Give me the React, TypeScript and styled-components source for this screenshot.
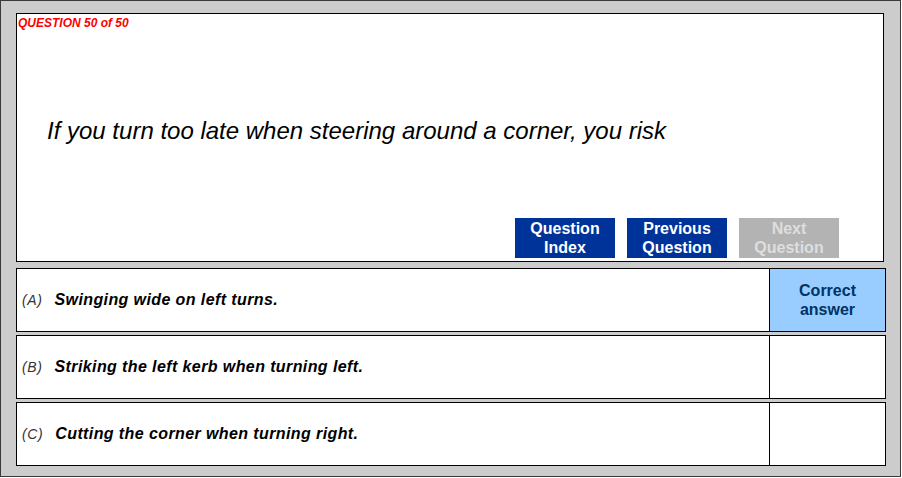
import React from "react"
import styled, { createGlobalStyle } from "styled-components"

const GlobalStyle = createGlobalStyle`
  html, body {
    margin: 0;
    padding: 0;
    background: #ffffff;
  }
  body {
    font-family: "Liberation Sans", Arial, sans-serif;
  }
`

const Frame = styled.div`
  box-sizing: border-box;
  width: 901px;
  height: 477px;
  border: 1px solid #3a3a3a;
  background: #cccccc;
  padding: 12px 0 0 15px;
  display: flex;
  flex-direction: column;
`

const QuestionBox = styled.section`
  box-sizing: border-box;
  width: 868px;
  height: 249px;
  border: 1px solid #000000;
  background: #ffffff;
  display: flex;
  flex-direction: column;
`

const Counter = styled.div`
  padding: 2px 0 0 1px;
  font-size: 12px;
  line-height: 14px;
  font-weight: bold;
  font-style: italic;
  color: #ff0000;
`

const Prompt = styled.p`
  margin: 87px 0 0;
  padding-left: 30px;
  font-size: 24px;
  line-height: 28px;
  font-style: italic;
  color: #000000;
`

const NavBar = styled.nav`
  margin-top: auto;
  display: flex;
  justify-content: flex-end;
  gap: 12px;
  padding: 0 44px 3px 0;
`

const NavButton = styled.button<{ disabled?: boolean }>`
  box-sizing: border-box;
  width: 100px;
  height: 40px;
  margin: 0;
  padding: 0;
  border: none;
  background: ${(p) => (p.disabled ? "#b3b3b3" : "#003399")};
  color: ${(p) => (p.disabled ? "#dedede" : "#ffffff")};
  font-family: "Liberation Sans", Arial, sans-serif;
  font-size: 16px;
  line-height: 19px;
  font-weight: bold;
  text-align: center;
`

const Answers = styled.ol`
  list-style: none;
  margin: 6px 0 0;
  padding: 0;
  display: flex;
  flex-direction: column;
  gap: 3px;
`

const AnswerRow = styled.li`
  box-sizing: border-box;
  width: 870px;
  height: 64px;
  border: 1px solid #000000;
  background: #ffffff;
  display: grid;
  grid-template-columns: 1fr 115px;
`

const AnswerText = styled.div`
  border-right: 1px solid #000000;
  display: flex;
  align-items: center;
  padding-left: 5px;
  font-style: italic;
  color: #000000;
`

const Letter = styled.span`
  font-size: 14px;
  font-weight: normal;
  letter-spacing: 0.6px;
  color: #333333;
  margin-right: 12px;
`

const Option = styled.span`
  font-size: 16px;
  font-weight: bold;
  letter-spacing: 0.4px;
`

const Verdict = styled.div<{ isCorrect: boolean }>`
  display: flex;
  align-items: center;
  justify-content: center;
  background: ${(p) => (p.isCorrect ? "#99ccff" : "#ffffff")};
  color: #003366;
  font-size: 16px;
  line-height: 19px;
  font-weight: bold;
  text-align: center;
`

const options = [
  { letter: "A", text: "Swinging wide on left turns.", correct: true },
  { letter: "B", text: "Striking the left kerb when turning left.", correct: false },
  { letter: "C", text: "Cutting the corner when turning right.", correct: false }
]

const App: React.FC = () => {
  return (
    <>
      <GlobalStyle />
      <Frame>
        <QuestionBox>
          <Counter>QUESTION 50 of 50</Counter>
          <Prompt>If you turn too late when steering around a corner, you risk</Prompt>
          <NavBar>
            <NavButton>
              Question
              <br />
              Index
            </NavButton>
            <NavButton>
              Previous
              <br />
              Question
            </NavButton>
            <NavButton disabled>
              Next
              <br />
              Question
            </NavButton>
          </NavBar>
        </QuestionBox>
        <Answers>
          {options.map((option) => (
            <AnswerRow key={option.letter}>
              <AnswerText>
                <Letter>{`(${option.letter})`}</Letter>
                <Option>{option.text}</Option>
              </AnswerText>
              <Verdict isCorrect={option.correct}>
                {option.correct && (
                  <>
                    Correct
                    <br />
                    answer
                  </>
                )}
              </Verdict>
            </AnswerRow>
          ))}
        </Answers>
      </Frame>
    </>
  )
}

export default App
